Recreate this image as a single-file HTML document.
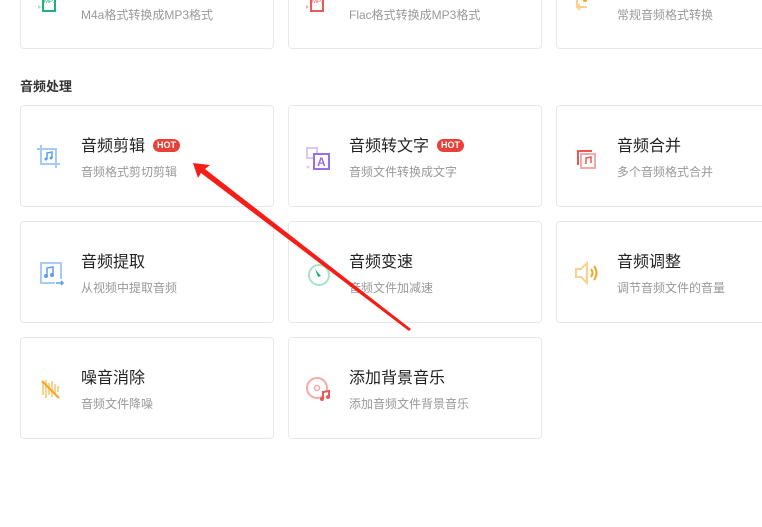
<!DOCTYPE html>
<html><head><meta charset="utf-8"><style>
*{margin:0;padding:0;box-sizing:border-box}
body{width:762px;height:527px;background:#fff;position:relative;overflow:hidden;font-family:"Liberation Sans","Noto Sans CJK SC",sans-serif}
.c{position:absolute;width:254px;height:102px;border:1px solid #e8e8e8;border-radius:4px;background:#fff}
.t{position:absolute;left:60px;top:26px;font-size:16px;color:#222;white-space:nowrap}
.s{position:absolute;left:60px;top:57px;font-size:12px;color:#999;white-space:nowrap}
.i{position:absolute;left:16px;top:37px;width:28px;height:28px}
.hot{display:inline-block;background:#e8413a;color:#fff;font-size:9px;font-weight:bold;border-radius:7px;padding:1px 4px;margin-left:8px;vertical-align:3px;line-height:11px}
h3{position:absolute;left:20px;top:76px;font-size:13px;font-weight:bold;color:#333}
</style></head><body>
<div class="c" style="left:20px;top:-53px"><svg class="i" style="top:47px" viewBox="0 0 28 28"><rect x="6" y="2" width="12" height="14" fill="none" stroke="#1fb07a" stroke-width="2"/><text x="7" y="8" font-size="6" fill="#1fb07a">MP3</text><path d="M1 10l3 2-3 2z" fill="#a6e2c8"/></svg><div class="s" style="top:58px">M4a格式转换成MP3格式</div></div>
<div class="c" style="left:288px;top:-53px"><svg class="i" style="top:47px" viewBox="0 0 28 28"><rect x="6" y="2" width="12" height="14" fill="none" stroke="#e85a55" stroke-width="2"/><text x="7" y="8" font-size="6" fill="#e85a55">MP3</text><path d="M1 10l3 2-3 2z" fill="#f4b0ad"/></svg><div class="s" style="top:58px">Flac格式转换成MP3格式</div></div>
<div class="c" style="left:556px;top:-53px"><svg class="i" style="top:47px" viewBox="0 0 28 28"><path d="M4 4v8h10M4 12l3-3M4 12l3 3" stroke="#fbd18f" stroke-width="2" fill="none"/><circle cx="12" cy="5" r="2" fill="#f7a423"/></svg><div class="s" style="top:58px">常规音频格式转换</div></div>

<h3>音频处理</h3>

<div class="c" style="left:20px;top:105px"><svg class="i" viewBox="0 0 28 28"><path d="M4 2v19h19M0 6h19v19" stroke="#a6cbf6" stroke-width="2" fill="none"/><path d="M10 16v-6l5-1v6" stroke="#5b9ef0" stroke-width="1.5" fill="none"/><circle cx="9" cy="16" r="1.5" fill="#5b9ef0"/><circle cx="14" cy="15" r="1.5" fill="#5b9ef0"/></svg><div class="t">音频剪辑<span class="hot">HOT</span></div><div class="s">音频格式剪切剪辑</div></div>
<div class="c" style="left:288px;top:105px"><svg class="i" viewBox="0 0 28 28"><rect x="2" y="5" width="10" height="10" fill="none" stroke="#d9c7f7" stroke-width="2"/><rect x="9" y="11" width="15" height="15" fill="#fff" stroke="#9a6ee8" stroke-width="2"/><text x="12" y="23" font-size="12" font-weight="bold" fill="#9a6ee8">A</text><path d="M2 22l3 2-3 2z" fill="#d9c7f7"/></svg><div class="t">音频转文字<span class="hot">HOT</span></div><div class="s">音频文件转换成文字</div></div>
<div class="c" style="left:556px;top:105px"><svg class="i" viewBox="0 0 28 28"><path d="M5 22V8h14" stroke="#e85a55" stroke-width="2" fill="none"/><rect x="8" y="11" width="14" height="14" fill="none" stroke="#f4aaa7" stroke-width="2"/><path d="M13 21v-6l5-1v6" stroke="#e85a55" stroke-width="1.5" fill="none"/></svg><div class="t">音频合并</div><div class="s">多个音频格式合并</div></div>

<div class="c" style="left:20px;top:221px"><svg class="i" viewBox="0 0 28 28"><path d="M24 20V4H4v20h14" stroke="#a6cbf6" stroke-width="2" fill="none"/><path d="M10 17v-8l6-1v8" stroke="#5b9ef0" stroke-width="1.5" fill="none"/><circle cx="9" cy="17" r="2" fill="#5b9ef0"/><circle cx="15" cy="16" r="2" fill="#5b9ef0"/><path d="M19 24h7M24 22l2 2-2 2" stroke="#5b9ef0" stroke-width="1.5" fill="none"/></svg><div class="t">音频提取</div><div class="s">从视频中提取音频</div></div>
<div class="c" style="left:288px;top:221px"><svg class="i" viewBox="0 0 28 28"><circle cx="14" cy="16" r="10" stroke="#a6e2c8" stroke-width="2" fill="none"/><path d="M10 10l6 7-3 1z" fill="#1fb07a"/></svg><div class="t">音频变速</div><div class="s">音频文件加减速</div></div>
<div class="c" style="left:556px;top:221px"><svg class="i" viewBox="0 0 28 28"><path d="M3 10h5l6-6v20l-6-6H3z" stroke="#fbd18f" stroke-width="2" fill="none"/><path d="M18 10q3 4 0 8M21 7q5 7 0 14" stroke="#f7a423" stroke-width="2" fill="none"/></svg><div class="t">音频调整</div><div class="s">调节音频文件的音量</div></div>

<div class="c" style="left:20px;top:337px"><svg class="i" viewBox="0 0 28 28"><path d="M6 8v12M9 5v18M12 8v12M15 6v16M18 9v10M21 11v6" stroke="#fbd18f" stroke-width="2"/><path d="M5 6l17 17" stroke="#f7a423" stroke-width="2"/></svg><div class="t">噪音消除</div><div class="s">音频文件降噪</div></div>
<div class="c" style="left:288px;top:337px"><svg class="i" viewBox="0 0 28 28"><circle cx="12" cy="13" r="10" stroke="#f4aaa7" stroke-width="2" fill="none"/><circle cx="12" cy="13" r="2.5" stroke="#f4aaa7" stroke-width="1.5" fill="none"/><path d="M18 24v-7l6-1v6" stroke="#e85a55" stroke-width="2" fill="#fff"/><circle cx="17" cy="24" r="2" fill="#e85a55"/><circle cx="23" cy="22" r="2" fill="#e85a55"/></svg><div class="t">添加背景音乐</div><div class="s">添加音频文件背景音乐</div></div>

<svg style="position:absolute;left:0;top:0" width="762" height="527"><polygon points="193,163 210,165 205,169 411,329 409,331 201,173 198,178" fill="#f41e16"/></svg>
</body></html>
